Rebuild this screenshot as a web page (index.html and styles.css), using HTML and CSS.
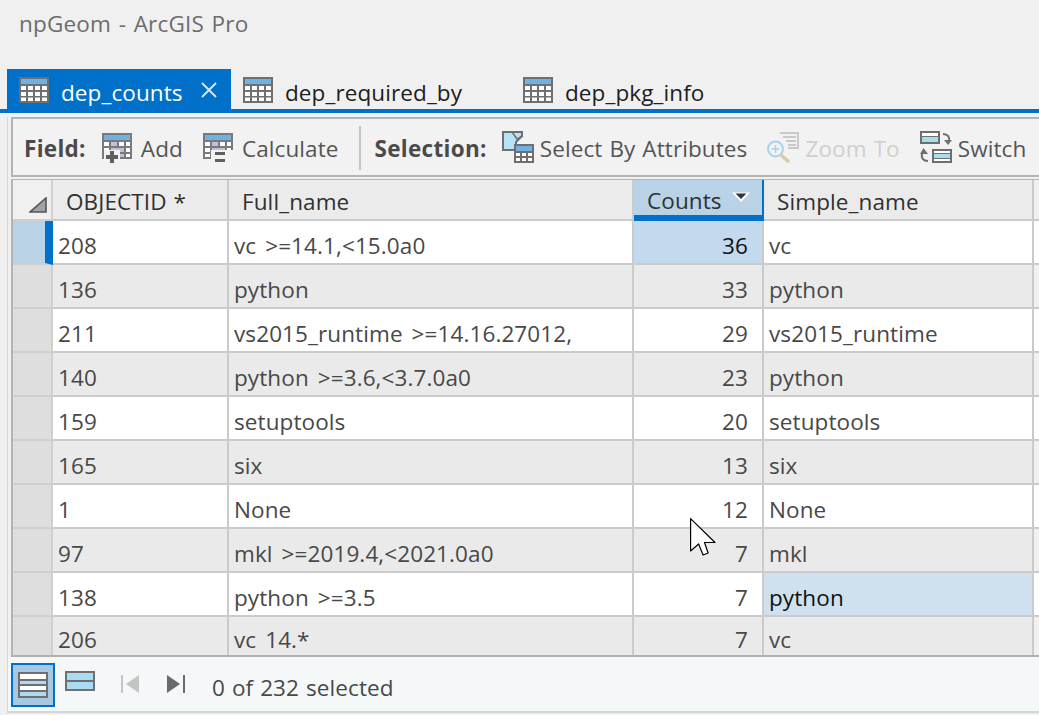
FILE: index.html
```html
<!DOCTYPE html>
<html lang="en">
<head>
<meta charset="utf-8">
<title>npGeom - ArcGIS Pro</title>
<link rel="stylesheet" href="styles.css">
</head>
<body>
<svg class="defs" width="0" height="0" aria-hidden="true">
  <symbol id="tbl" viewBox="0 0 30 26">
    <rect x="0" y="0" width="30" height="26" fill="#6f6f6f"/>
    <rect x="2" y="2" width="26" height="5" fill="#6fb1e3"/>
    <g fill="#fff">
      <rect x="2" y="9" width="5" height="4"/><rect x="9" y="9" width="5" height="4"/><rect x="16" y="9" width="5" height="4"/><rect x="23" y="9" width="5" height="4"/>
      <rect x="2" y="15" width="5" height="4"/><rect x="9" y="15" width="5" height="4"/><rect x="16" y="15" width="5" height="4"/><rect x="23" y="15" width="5" height="4"/>
      <rect x="2" y="20.5" width="5" height="3.5"/><rect x="9" y="20.5" width="5" height="3.5"/><rect x="16" y="20.5" width="5" height="3.5"/><rect x="23" y="20.5" width="5" height="3.5"/>
    </g>
  </symbol>
</svg>

<header class="title">npGeom - ArcGIS Pro</header>

<nav class="tabs">
  <div class="tab active"><svg class="tab-icon"><use href="#tbl"/></svg><span class="tab-text">dep_counts</span><svg class="close" width="16" height="16" viewBox="0 0 16 16"><path d="M1 1l14 14M15 1L1 15" stroke="#cfe6f7" stroke-width="2"/></svg></div>
  <div class="tab second"><svg class="tab-icon"><use href="#tbl"/></svg><span class="tab-text">dep_required_by</span></div>
  <div class="tab third"><svg class="tab-icon"><use href="#tbl"/></svg><span class="tab-text">dep_pkg_info</span></div>
</nav>

<main class="panel">
  <div class="toolbar">
    <b class="label">Field:</b>
    <span class="tool t-add">
      <svg class="ico" viewBox="0 0 30 30"><path fill="#7a7a7a" d="M0 0h30v26H0z"/><path fill="#6fb1e3" d="M2 2h26v5H2z"/><path fill="#fff" d="M2 9h5v4H2zM9 9h6v4H9zM17 9h5v4h-5zM24 9h4v4h-4zM2 15h5v4H2zM24 15h4v4h-4zM2 21h5v3H2zM24 21h4v3h-4z"/><path fill="#c6bfdc" d="M9 9h6v4H9zM9 15h13v4H9zM9 21h13v3H9z"/><path fill="#f2f2f2" d="M2 17h16v13H2z"/><path fill="#5f5f5f" d="M8 18h4v4h4v4h-4v4H8v-4H4v-4h4z"/></svg>
      Add
    </span>
    <span class="tool t-calc">
      <svg class="ico" viewBox="0 0 30 30"><path fill="#7a7a7a" d="M0 0h30v26H0z"/><path fill="#6fb1e3" d="M2 2h26v5H2z"/><path fill="#fff" d="M2 9h5v4H2zM17 9h5v4h-5zM24 9h4v4h-4zM2 15h5v4H2zM24 15h4v4h-4zM2 21h5v3H2z"/><path fill="#c6bfdc" d="M9 9h6v4H9zM9 15h13v4H9z"/><path fill="#f2f2f2" d="M8 17h22v13H8z"/><path fill="#5f5f5f" d="M12 19h10v3H12zM12 26h10v3H12z"/></svg>
      Calculate
    </span>
    <i class="sep"></i>
    <b class="label">Selection:</b>
    <span class="tool t-sel">
      <svg class="ico-sel" viewBox="0 0 32 32"><path fill="#b5e3f7" stroke="#6f6f6f" stroke-width="2" d="M1 1h19v4l-6 6v8H1z"/><path fill="none" stroke="#6f6f6f" stroke-width="1.5" d="M10 1l5 7 6-3"/><path fill="#6f6f6f" d="M12 13h20v19H12z"/><path fill="#6fb1e3" d="M14 15h16v5H14z"/><path fill="#fff" d="M14 22h4v3h-4zM20 22h4v3h-4zM26 22h4v3h-4zM14 27h4v3h-4zM20 27h4v3h-4zM26 27h4v3h-4z"/></svg>
      Select By Attributes
    </span>
    <span class="tool t-zoom off">
      <svg class="ico-sel" viewBox="0 0 32 32"><path fill="none" stroke="#c9c9c9" stroke-width="2" d="M13 2h18v15H21M16 6h13M19 10h10M21 14h8"/><circle cx="8.5" cy="18" r="7.5" fill="#f2f2f2" stroke="#a9d3ea" stroke-width="2"/><path stroke="#a9d3ea" stroke-width="1.6" d="M4.5 18h8M8.5 14v8"/><path stroke="#dcc8ad" stroke-width="3.5" d="M14 24l8 7"/></svg>
      Zoom To
    </span>
    <span class="tool t-switch">
      <svg class="ico-sel" viewBox="0 0 32 32"><path fill="#6f6f6f" d="M0 0h20v13H0zM12 18h20v14H12z"/><path fill="#fff" d="M2 2h16v3H2zM14 20h16v2H14zM14 28h16v2H14z"/><path fill="#a9dcf2" d="M2 6h16v5H2zM14 23h16v4H14z"/><path fill="none" stroke="#6f6f6f" stroke-width="2" d="M23 3c5 0 7 3 6 8M8 30c-5 0-7-3-6-8"/><path fill="#6f6f6f" d="M24 9h8l-4 5zM0 23l3.500-6 4.500 6z"/></svg>
      Switch
    </span>
  </div>

  <div class="grid">
    <div class="row head">
      <div class="rh corner"><svg width="18" height="16" viewBox="0 0 18 16"><path d="M17 1v14H1z" fill="#a2a2a2" stroke="#555" stroke-width="1.600"/></svg></div>
      <div class="c hc">OBJECTID *</div>
      <div class="c hc">Full_name</div>
      <div class="c hc sorted">Counts<svg class="sort" width="20" height="11" viewBox="0 0 20 11"><path d="M1 .5h18L10 10z" fill="#fff"/><path d="M4.500 1.500h11L10 7z" fill="#333"/></svg></div>
      <div class="c hc">Simple_name</div>
      <div class="c end"></div>
    </div>

    <div class="row current"><div class="rh"></div><div class="c">208</div><div class="c">vc &gt;=14.1,&lt;15.0a0</div><div class="c r sel">36</div><div class="c">vc</div><div class="c end"></div></div>
    <div class="row alt"><div class="rh"></div><div class="c">136</div><div class="c">python</div><div class="c r">33</div><div class="c">python</div><div class="c end"></div></div>
    <div class="row"><div class="rh"></div><div class="c">211</div><div class="c">vs2015_runtime &gt;=14.16.27012,</div><div class="c r">29</div><div class="c">vs2015_runtime</div><div class="c end"></div></div>
    <div class="row alt"><div class="rh"></div><div class="c">140</div><div class="c">python &gt;=3.6,&lt;3.7.0a0</div><div class="c r">23</div><div class="c">python</div><div class="c end"></div></div>
    <div class="row"><div class="rh"></div><div class="c">159</div><div class="c">setuptools</div><div class="c r">20</div><div class="c">setuptools</div><div class="c end"></div></div>
    <div class="row alt"><div class="rh"></div><div class="c">165</div><div class="c">six</div><div class="c r">13</div><div class="c">six</div><div class="c end"></div></div>
    <div class="row"><div class="rh"></div><div class="c">1</div><div class="c">None</div><div class="c r">12</div><div class="c">None</div><div class="c end"></div></div>
    <div class="row alt"><div class="rh"></div><div class="c">97</div><div class="c">mkl &gt;=2019.4,&lt;2021.0a0</div><div class="c r">7</div><div class="c">mkl</div><div class="c end"></div></div>
    <div class="row"><div class="rh"></div><div class="c">138</div><div class="c">python &gt;=3.5</div><div class="c r">7</div><div class="c sel dark">python</div><div class="c end"></div></div>
    <div class="row alt last"><div class="rh"></div><div class="c">206</div><div class="c">vc 14.*</div><div class="c r">7</div><div class="c">vc</div><div class="c end"></div></div>
  </div>

  <footer class="foot">
    <span class="view on"><svg width="30" height="26" viewBox="0 0 30 26"><path fill="#6f6f6f" d="M0 0h30v26H0z"/><path fill="#fff" d="M2 2h26v5H2zM2 14h26v4H2z"/><path fill="#a9dcf2" d="M2 9h26v3H2zM2 20h26v4H2z"/></svg></span>
    <svg class="view-b" width="30" height="20" viewBox="0 0 30 20"><path fill="#6f6f6f" d="M0 0h30v20H0z"/><path fill="#a9dcf2" d="M2 2h26v7H2zM2 11h26v7H2z"/></svg>
    <svg class="nav-a" width="18" height="18" viewBox="0 0 18 18"><path fill="#c3c3c3" d="M0 0h2v18H0zM18 0v18L5 9z"/></svg>
    <svg class="nav-b" width="18" height="18" viewBox="0 0 18 18"><path fill="#6a6a6a" d="M16 0h2v18h-2zM0 0v18l13-9z"/></svg>
    <span class="count">0 of 232 selected</span>
  </footer>
</main>

<svg class="cursor" width="26" height="38" viewBox="0 0 26 38"><path d="M.6.6V33l8-7 4.500 11 5-2-3.600-10.500H25z" fill="#fff" stroke="#000" stroke-width="1.200" stroke-linejoin="round"/></svg>
</body>
</html>
```

FILE: styles.css
```css
* { box-sizing: border-box; }
html, body { margin: 0; height: 100%; }
body {
  position: relative;
  overflow: hidden;
  background: #f0f0f0;
  font-family: "Open Sans", "Noto Sans", sans-serif;
  font-size: 22.5px;
  color: #404040;
  letter-spacing: 0.1px;
  word-spacing: 1px;
}
.defs { position: absolute; }
.title { height: 69px; padding: 9px 0 0 19px; font-size: 22.5px; line-height: 30px; color: #6c6c6c; letter-spacing: 0.2px; word-spacing: 1.5px; }

.tabs { display: flex; height: 44px; padding-left: 7px; border-bottom: 4px solid #0070c8; color: #202020; }
.tab { display: flex; align-items: center; height: 40px; padding-left: 12px; }
.tab-icon { width: 30px; height: 26px; margin: 2px 12px 0 0; flex: none; }
.tab-text { padding-top: 6px; }
.tab.active { width: 224px; background: #0070c8; color: #fff; height: 44px; padding-bottom: 4px; }
.close { margin: 2px 0 0 18px; flex: none; }
.tab.second { width: 280px; }
.tab.third { flex: none; }

.panel { margin: 4px 0 0 7px; height: 596px; border-left: 1px solid #d8d8d8; border-bottom: 2px solid #d5d5d5; display: flex; flex-direction: column; }

.toolbar { display: flex; align-items: center; height: 60px; flex: none; margin-left: 3px; padding: 2px 0 0 11px; border: 2px solid #b4b4b4; border-right: none; background: #f2f2f2; color: #555; white-space: nowrap; }
.label { font-weight: 700; color: #4a4a4a; letter-spacing: 0.3px; }
.tool { display: flex; align-items: center; }
.ico { width: 30px; height: 30px; margin-right: 9px; flex: none; }
.ico-sel { width: 32px; height: 32px; margin: -2px 6px 0 0; flex: none; }
.t-add { margin-left: 16px; }
.t-calc { margin-left: 20px; }
.sep { width: 2px; height: 44px; background: #c4c4c4; margin: 0 14px 0 20px; }
.t-sel { margin-left: 15px; }
.t-zoom { margin-left: 20px; }
.t-switch { margin-left: 20px; }
.off { color: #cfcfcf; }

.grid { flex: none; height: 478px; margin: 2px 0 0 3px; display: flex; flex-direction: column; background: #fff; border-left: 2px solid #b4b4b4; border-top: 1px solid #b4b4b4; border-bottom: 2px solid #b0b0b0; overflow: hidden; }
.row { display: grid; grid-template-columns: 40px 176px 405px 130px 270px 1fr; height: 44px; flex: none; background: #fff; }
.row.alt { background: #eaeaea; }
.row.head { height: 41px; background: #ebebeb; }
.row.last { height: 38px; }
.rh { background: #dedede; border-right: 2px solid #d0d0d0; border-bottom: 2px solid #cfcfcf; }
.c { display: flex; align-items: center; padding: 6px 0 0 5px; border-right: 2px solid #cbcbcb; border-bottom: 2px solid #cbcbcb; white-space: nowrap; color: #484848; min-width: 0; overflow: hidden; word-spacing: 3px; }
.r { justify-content: flex-end; padding-right: 14px; }
.end { border-right: none; background: #fff; padding: 0; }
.row.alt .end { background: #f0f0f0; }
.hc { padding: 4px 0 0 13px; color: #303030; background: #ebebeb; word-spacing: 1px; }
.row.head .end { background: #f0f0f0; }
.row.head .rh { display: flex; align-items: flex-end; justify-content: flex-end; padding: 0 4px 6px 0; background: #f0f0f0; }
.sorted { position: relative; background: #b9d2e6; border-bottom: 6px solid #0070c8; border-right: 2px solid #0070c8; padding-top: 6px; }
.sort { margin: -6px 0 0 9px; flex: none; }
.current .rh { background: #b9d2e6; border-right: 8px solid #0070c8; }
.sel { background: #c3d9ed; color: #111; }
.dark { background: #cfe1ef; }
.row.last .c, .row.last .rh { border-bottom: none; }

.foot { flex: 1; display: flex; align-items: center; background: #f5f8f8; padding-left: 3px; }
.view { display: flex; align-items: center; justify-content: center; width: 44px; height: 44px; flex: none; }
.view.on { background: #a7c7e2; border: 2px solid #0070c8; margin-top: 2px; }
.view-b { margin: -6px 0 0 10px; flex: none; }
.nav-a { margin-left: 26px; flex: none; }
.nav-b { margin-left: 28px; flex: none; }
.count { margin-left: 27px; padding-top: 6px; color: #484848; }

.cursor { position: absolute; left: 690px; top: 518px; }
```
